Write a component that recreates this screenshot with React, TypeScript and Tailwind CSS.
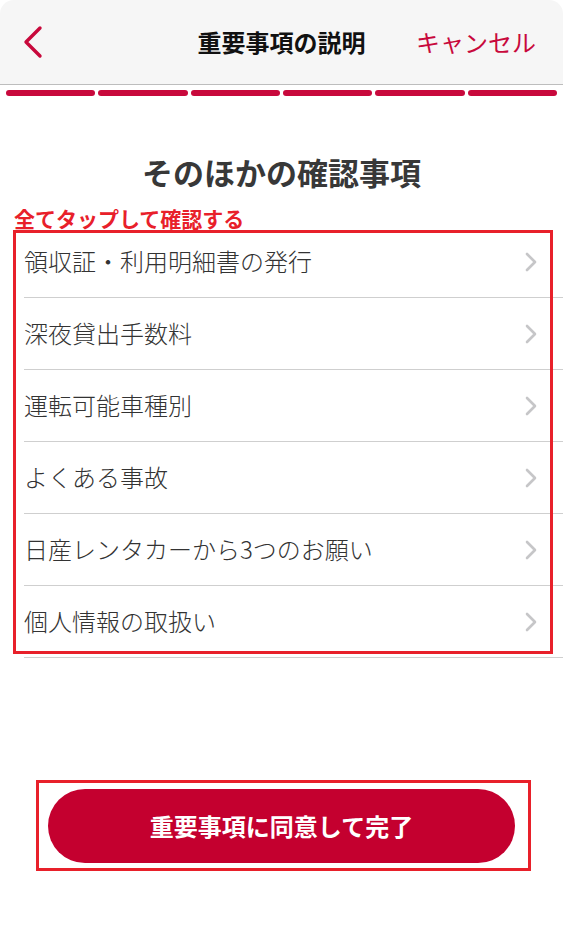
import React from "react";

const items = [
  "領収証・利用明細書の発行",
  "深夜貸出手数料",
  "運転可能車種別",
  "よくある事故",
  "日産レンタカーから3つのお願い",
  "個人情報の取扱い",
];

function RowChevron() {
  return (
    <svg width="12" height="20" viewBox="0 0 12 20" fill="none" className="shrink-0">
      <path d="M2 2 L10 10 L2 18" stroke="#c6c6c8" strokeWidth="2.6" strokeLinecap="round" strokeLinejoin="round" />
    </svg>
  );
}

export default function App() {
  return (
    <div
      className="relative min-h-[941px] w-[563px] bg-white"
      style={{ fontFamily: '"Noto Sans CJK JP", "Noto Sans", sans-serif' }}
    >
      {/* header */}
      <div className="grid h-[85px] grid-cols-[1fr_auto_1fr] items-center rounded-t-[14px] border-b border-[#bdbdbd] bg-[#f6f6f6]">
        <div className="pl-[22px]">
          <svg width="22" height="34" viewBox="0 0 22 34" fill="none">
            <path d="M18 3 L4 17 L18 31" stroke="#c8093c" strokeWidth="3.4" strokeLinecap="round" strokeLinejoin="round" />
          </svg>
        </div>
        <p className="text-[24px] font-bold leading-none text-[#111]">重要事項の説明</p>
        <p className="justify-self-end pr-[27px] text-[24px] leading-none text-[#c8093c]">キャンセル</p>
      </div>

      {/* progress */}
      <div className="mt-[5px] flex h-[6px] gap-[3px] px-[6px]">
        {[0, 1, 2, 3, 4, 5].map((i) => (
          <div key={i} className="h-full flex-1 rounded-full bg-[#c8093c]" />
        ))}
      </div>

      <h1 className="mt-[56px] text-center text-[31px] font-bold leading-[40px] text-[#383838]">
        そのほかの確認事項
      </h1>

      <p className="mt-[18px] pl-[14px] text-[21px] font-bold leading-[16px] text-[#e8202a]">
        全てタップして確認する
      </p>

      {/* list */}
      <div className="relative">
        {items.map((label) => (
          <div
            key={label}
            className="ml-[24px] flex h-[72px] items-center justify-between border-b border-[#cfcfcf] pr-[26px]"
          >
            <span className="-mt-[2px] text-[24px] font-light leading-none text-[#333]">{label}</span>
            <RowChevron />
          </div>
        ))}
        <div className="pointer-events-none absolute left-[13px] top-[4px] h-[424px] w-[540px] border-[3px] border-[#e8202a]" />
      </div>

      {/* button */}
      <div className="relative ml-[48px] mt-[131px] w-[467px]">
        <button
          type="button"
          className="flex h-[74px] w-full items-center justify-center rounded-[37px] bg-[#c4002f] text-[24px] font-bold text-white"
        >
          重要事項に同意して完了
        </button>
        <div className="pointer-events-none absolute -left-[12px] -top-[9px] h-[91px] w-[495px] border-[3px] border-[#e8202a]" />
      </div>
    </div>
  );
}
